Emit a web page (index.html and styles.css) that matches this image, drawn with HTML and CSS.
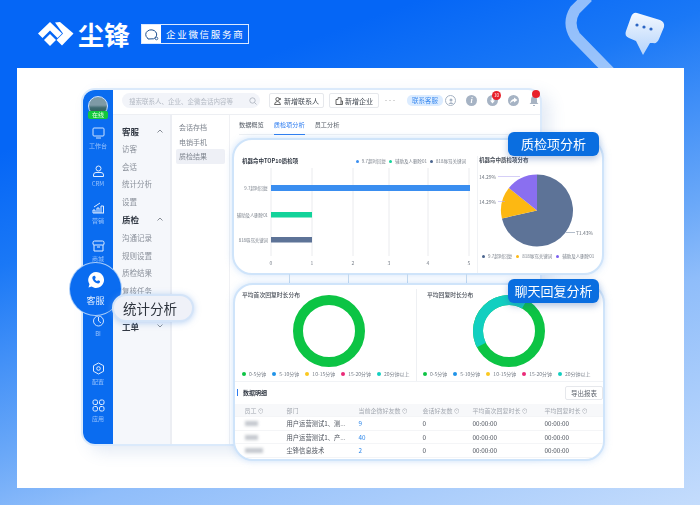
FILE: index.html
```html
<!DOCTYPE html>
<html>
<head>
    <title>尘锋 企业微信服务商</title>
    <link rel="stylesheet" href="styles.css">
</head>
<body>
<div class="page">
    <svg class="deco-ring" width="110" height="68" viewBox="0 0 110 68">
        <path d="M28 -3 L15 10 Q7 23 15 36 L50 72" fill="none" stroke="#fff" stroke-opacity="0.55" stroke-width="11"/>
    </svg>
    <svg class="deco-bubble" width="44" height="48" viewBox="0 0 44 48">
        <defs><linearGradient id="bub" x1="0" y1="0" x2="0" y2="1"><stop offset="0" stop-color="#f3f8ff"/><stop offset="1" stop-color="#b4d3fb"/></linearGradient></defs>
        <path d="M14 2 L37 9 Q42 11 41 16 L36 28 Q34 33 30 32 L27 32 L20 44 L13 30 L6 27 Q1 25 3 20 L8 6 Q10 1 14 2 Z" fill="url(#bub)"/>
        <circle cx="14" cy="14" r="1.6" fill="#2c66c4"/><circle cx="21" cy="16" r="1.6" fill="#2c66c4"/><circle cx="28" cy="18" r="1.6" fill="#2c66c4"/>
    </svg>

    <header class="brand">
        <svg class="brand-logo" width="36" height="24" viewBox="0 0 36 24">
            <path d="M0 11.5 L12 0 L24 11.5 L19.500 16 L12 8.500 L4.500 16 Z" fill="#fff"/>
            <path d="M12 12 L18 18 L12 24 L6 18 Z" fill="#fff"/>
            <path d="M17 0.500 L22 0 L35.500 11.500 L24 23.500 L18.500 18 L25 11.500 Z" fill="#fff"/>
        </svg>
        <span class="brand-name">尘锋</span>
        <div class="partner">
            <span class="partner-icon">
                <svg width="15" height="13" viewBox="0 0 15 13"><path d="M3.500 10 A5.500 4.700 0 1 1 9.500 10.800 L4 11 Z" fill="none" stroke="#1c4f8f" stroke-width="1"/><circle cx="12.500" cy="10.500" r="1.300" fill="none" stroke="#1c4f8f" stroke-width="0.800"/></svg>
            </span>
            <span class="partner-text">企业微信服务商</span>
        </div>
    </header>

    <main class="panel">
        <div class="app">
            <aside class="rail">
                <div class="avatar-wrap">
                    <span class="avatar"></span>
                    <span class="online">在线</span>
                </div>
                <div class="rail-item">
                    <svg width="13" height="12" viewBox="0 0 13 12"><rect x="1" y="1" width="11" height="8" rx="1" fill="none" stroke="#cfe3ff"/><path d="M4 11 H9" stroke="#cfe3ff"/></svg>
                    <span>工作台</span>
                </div>
                <div class="rail-item">
                    <svg width="13" height="12" viewBox="0 0 13 12"><circle cx="6.500" cy="3.500" r="2.500" fill="none" stroke="#e2eeff"/><path d="M1.500 11.500 V10 Q1.500 7.500 4 7.500 H9 Q11.500 7.500 11.500 10 V11.500 Z" fill="none" stroke="#e2eeff"/></svg>
                    <span>CRM</span>
                </div>
                <div class="rail-item">
                    <svg width="13" height="12" viewBox="0 0 13 12"><path d="M1 11 V8 H3 V11 M5 11 V6 H7 V11 M9 11 V4 H11.500 V11 M1 11 H12 M2 5 L8 1" fill="none" stroke="#e2eeff"/></svg>
                    <span>营销</span>
                </div>
                <div class="rail-item">
                    <svg width="13" height="12" viewBox="0 0 13 12"><path d="M2 5 V11 H11 V5 M1 2.500 Q1 1 2.500 1 H10.500 Q12 1 12 2.500 V4 Q12 5 10.500 5 H2.500 Q1 5 1 4 Z M5 7 H8" fill="none" stroke="#e2eeff"/></svg>
                    <span>商城</span>
                </div>
                <div class="rail-item rail-gap">
                    <svg width="13" height="12" viewBox="0 0 13 12"><circle cx="6.500" cy="6" r="5" fill="none" stroke="#cfe3ff"/><path d="M6.500 2 V6 L9 8" fill="none" stroke="#cfe3ff"/></svg>
                    <span>BI</span>
                </div>
                <div class="rail-item rail-gap-sm">
                    <svg width="13" height="13" viewBox="0 0 13 13"><path d="M6.500 1 L11.500 3.700 V9.300 L6.500 12 L1.500 9.300 V3.700 Z" fill="none" stroke="#e2eeff" stroke-linejoin="round"/><circle cx="6.500" cy="6.500" r="1.800" fill="none" stroke="#e2eeff"/></svg>
                    <span>配置</span>
                </div>
                <div class="rail-item">
                    <svg width="13" height="13" viewBox="0 0 13 13"><g fill="none" stroke="#e2eeff"><rect x="1" y="1" width="4.500" height="4.500" rx="1.500"/><rect x="7.500" y="1" width="4.500" height="4.500" rx="1.500"/><rect x="1" y="7.500" width="4.500" height="4.500" rx="1.500"/><rect x="7.500" y="7.500" width="4.500" height="4.500" rx="1.500"/></g></svg>
                    <span>应用</span>
                </div>
            </aside>

            <div class="app-body">
                <div class="topbar">
                    <div class="search">
                        <span>搜索联系人、企业、企微会话内容等</span>
                        <svg width="8" height="8" viewBox="0 0 8 8"><circle cx="3.500" cy="3.500" r="2.700" fill="none" stroke="#a9b0bb" stroke-width="0.8"/><path d="M5.500 5.500 L7.500 7.500" stroke="#a9b0bb" stroke-width="0.8"/></svg>
                    </div>
                    <button class="top-btn btn-contact">
                        <svg width="8" height="8" viewBox="0 0 8 8"><circle cx="3.500" cy="2.200" r="1.700" fill="none" stroke="#444" stroke-width="0.8"/><path d="M0.500 7.500 Q1 4.500 3.500 4.500 Q6 4.500 6.500 7.500 Z M6 1 V3 M5 2 H7" fill="none" stroke="#444" stroke-width="0.8"/></svg>
                        新增联系人
                    </button>
                    <button class="top-btn btn-company">
                        <svg width="8" height="8" viewBox="0 0 8 8"><path d="M1 7.500 V2.500 H3 V0.700 H6 V7.500 Z M6 4 H7.500 V7.500 H6" fill="none" stroke="#444" stroke-width="0.8"/></svg>
                        新增企业
                    </button>
                    <span class="dots">•••</span>
                    <span class="service">联系客服</span>
                    <div class="top-icons">
                        <span class="round-icon round-a">
                            <svg width="8" height="8" viewBox="0 0 8 8"><circle cx="4" cy="3" r="1.500" fill="#a6b3c4"/><path d="M1.500 7 Q4 3.500 6.500 7 Z" fill="#a6b3c4"/></svg>
                        </span>
                        <span class="round-icon round-i">i</span>
                        <span class="round-icon">
                            <svg width="11" height="11" viewBox="0 0 11 11"><path d="M4.500 2.500 H6.500 V5.500 H8 L5.500 8.500 L3 5.500 H4.500 Z" fill="#fff"/></svg>
                            <em class="badge">10</em>
                        </span>
                        <span class="round-icon">
                            <svg width="11" height="11" viewBox="0 0 11 11"><path d="M6 2.500 L9.500 5 L6 7.500 V6 Q3.500 6 2 8.500 Q2.500 4.500 6 4 Z" fill="#fff"/></svg>
                        </span>
                        <span class="bell">
                            <svg width="10" height="11" viewBox="0 0 10 11"><path d="M5 1 Q8 1 8 5 V7.500 L9.500 9 H0.500 L2 7.500 V5 Q2 1 5 1 Z M4 10 H6 V11 H4 Z" fill="#a7b3c2"/></svg>
                            <em class="badge badge-bell"></em>
                        </span>
                    </div>
                </div>

                <div class="work">
                    <nav class="nav">
                        <div class="nav-head">客服 <svg class="chev" width="6" height="4" viewBox="0 0 6 4"><path d="M0.500 3.500 L3 1 L5.500 3.500" fill="none" stroke="#7a808a" stroke-width="0.900"/></svg></div>
                        <a>访客</a>
                        <a>会话</a>
                        <a>统计分析</a>
                        <a>设置</a>
                        <div class="nav-head nav-head-2">质检 <svg class="chev" width="6" height="4" viewBox="0 0 6 4"><path d="M0.500 3.500 L3 1 L5.500 3.500" fill="none" stroke="#7a808a" stroke-width="0.900"/></svg></div>
                        <a>沟通记录</a>
                        <a>规则设置</a>
                        <a>质检结果</a>
                        <a>复核任务</a>
                        <div class="nav-head nav-head-3">工单 <svg class="chev" width="6" height="4" viewBox="0 0 6 4"><path d="M0.500 0.500 L3 3 L5.500 0.500" fill="none" stroke="#7a808a" stroke-width="0.900"/></svg></div>
                    </nav>
                    <div class="subnav">
                        <a>会话存档</a>
                        <a>电销手机</a>
                        <a class="on">质检结果</a>
                    </div>
                    <div class="content">
                        <div class="tabs">
                            <span>数据概览</span>
                            <span class="tab-on">质检项分析</span>
                            <span>员工分析</span>
                        </div>
                    </div>
                </div>
            </div>

            <!-- the two enlarged cards sit over the window -->
            <section class="card card-top">
                <div class="chart-bar">
                    <div class="chart-head">
                        <b>机器命中TOP10质检项</b>
                        <ul class="legend">
                            <li><i class="c-blue"></i>9.7超时回复</li>
                            <li><i class="c-mint"></i>辅助及人删除01</li>
                            <li><i class="c-slate"></i>818辱骂关键词</li>
                        </ul>
                    </div>
                    <svg width="238" height="102" viewBox="0 0 238 102" class="bars">
                        <g stroke="#e4e6ea" stroke-width="0.8">
                            <path d="M31 0 V88 M72 0 V88 M113 0 V88 M149 0 V88 M188 0 V88 M229 0 V88"/>
                        </g>
                        <rect x="31" y="17" width="199" height="6" fill="#3a8ef0"/>
                        <rect x="31" y="44" width="41" height="5.500" fill="#12d39a"/>
                        <rect x="31" y="69" width="41" height="5.500" fill="#5d7397"/>
                        <g font-size="4.400" fill="#7b828c" text-anchor="end">
                            <text x="28" y="22">9.7超时回复</text>
                            <text x="28" y="48.500">辅助及人删除01</text>
                            <text x="28" y="73.500">818辱骂关键词</text>
                        </g>
                        <g font-size="5" fill="#7b828c" text-anchor="middle">
                            <text x="31" y="97">0</text><text x="72" y="97">1</text><text x="113" y="97">2</text>
                            <text x="149" y="97">3</text><text x="188" y="97">4</text><text x="229" y="97">5</text>
                        </g>
                    </svg>
                </div>
                <div class="chart-pie">
                    <b>机器命中质检项分布</b>
                    <svg width="124" height="88" viewBox="0 0 124 88" class="pie">
                        <g transform="translate(58,45.500)">
                            <path d="M0 0 L0 -36 A36 36 0 1 1 -35.100 8 Z" fill="#5d7397"/>
                            <path d="M0 0 L-28.150 -22.440 A36 36 0 0 0 -35.100 8 Z" fill="#fdb812"/>
                            <path d="M0 0 L0 -36 A36 36 0 0 0 -28.150 -22.440 Z" fill="#8a6ff0"/>
                        </g>
                        <path d="M19 11.500 H41 M19 36.500 H26" stroke="#b9aef2" stroke-width="0.600" fill="none"/>
                        <path d="M87 67.500 H96" stroke="#8090a8" stroke-width="0.600" fill="none"/>
                        <g font-size="5" fill="#6c737d">
                            <text x="0" y="13.500">14.29%</text>
                            <text x="0" y="38.500">14.29%</text>
                            <text x="97" y="69.500">71.43%</text>
                        </g>
                    </svg>
                    <ul class="legend legend-pie">
                        <li><i class="c-slate"></i>9.7超时回复</li>
                        <li><i class="c-yellow"></i>818辱骂关键词</li>
                        <li><i class="c-violet"></i>辅助及人删除01</li>
                    </ul>
                </div>
            </section>

            <div class="links"><i></i><i></i><i></i><i></i></div>

            <section class="card card-bottom">
                <div class="donuts">
                    <div class="donut-box">
                        <b>平均首次回复时长分布</b>
                        <svg class="donut" width="72" height="72" viewBox="0 0 72 72">
                            <circle cx="36" cy="36" r="31" fill="none" stroke="#0cc444" stroke-width="10"/>
                        </svg>
                        <ul class="legend legend-donut">
                            <li><i class="c-green"></i>0-5分钟</li>
                            <li><i class="c-sky"></i>5-10分钟</li>
                            <li><i class="c-gold"></i>10-15分钟</li>
                            <li><i class="c-pink"></i>15-20分钟</li>
                            <li><i class="c-teal"></i>20分钟以上</li>
                        </ul>
                    </div>
                    <div class="donut-box">
                        <b class="donut-title-2">平均回复时长分布</b>
                        <svg class="donut" width="72" height="72" viewBox="0 0 72 72">
                            <circle cx="36" cy="36" r="31" fill="none" stroke="#0cc444" stroke-width="10"/>
                            <path d="M8.400 50.100 A31 31 0 0 1 51.500 9.200" fill="none" stroke="#12cfc0" stroke-width="10"/>
                        </svg>
                        <ul class="legend legend-donut">
                            <li><i class="c-green"></i>0-5分钟</li>
                            <li><i class="c-sky"></i>5-10分钟</li>
                            <li><i class="c-gold"></i>10-15分钟</li>
                            <li><i class="c-pink"></i>15-20分钟</li>
                            <li><i class="c-teal"></i>20分钟以上</li>
                        </ul>
                    </div>
                </div>
                <div class="detail-head">
                    <b>数据明细</b>
                    <button>导出报表</button>
                </div>
                <div class="table">
                    <div class="tr th">
                        <span>员工 ⊙</span><span>部门</span><span>当前企微好友数 ⊙</span><span>会话好友数 ⊙</span><span>平均首次回复时长 ⊙</span><span>平均回复时长 ⊙</span>
                    </div>
                    <div class="tr">
                        <span><i class="blur-name"></i></span><span>用户运营测试1、测...</span><span class="num">9</span><span>0</span><span>00:00:00</span><span>00:00:00</span>
                    </div>
                    <div class="tr">
                        <span><i class="blur-name"></i></span><span>用户运营测试1、产...</span><span class="num">40</span><span>0</span><span>00:00:00</span><span>00:00:00</span>
                    </div>
                    <div class="tr">
                        <span><i class="blur-name blur-long"></i></span><span>尘锋信息技术</span><span class="num">2</span><span>0</span><span>00:00:00</span><span>00:00:00</span>
                    </div>
                </div>
            </section>

            <div class="callout callout-a">质检项分析</div>
            <div class="callout callout-b">聊天回复分析</div>

            <div class="kefu">
                <svg width="18" height="18" viewBox="0 0 18 18">
                    <path d="M9 1 A8 8 0 1 1 4.500 15.600 L1.500 16.500 L2.500 13.300 A8 8 0 0 1 9 1 Z" fill="#fff"/>
                    <path d="M6.500 5 L8 4.800 L8.800 7 L7.800 8 Q8.500 9.500 10 10.200 L11 9.200 L13 10 L12.800 11.500 Q12 12.800 10 12.300 Q6 11 5.300 7 Q5.200 5.600 6.500 5 Z" fill="#0a6cf0"/>
                </svg>
                <span>客服</span>
            </div>
            <div class="pill">统计分析</div>
        </div>
    </main>
</div>
</body>
</html>
```

FILE: styles.css
```css
* {
    margin: 0;
    padding: 0;
    box-sizing: border-box;
}

body {
    width: 700px;
    height: 505px;
    overflow: hidden;
    font-family: 'Noto Sans CJK SC', 'Noto Sans', sans-serif;
}

ul {
    list-style: none;
}

i, em {
    font-style: normal;
}

.page {
    position: relative;
    width: 700px;
    height: 505px;
    padding: 22px 16px 0 17px;
    background: linear-gradient(160deg, #0566f6 20%, #1a78f6 35%, #6aa8f8 60%, #8fbdfa 70%, #c4dcfc 100%);
    overflow: hidden;
}

.deco-ring {
    position: absolute;
    top: 0;
    left: 560px;
}

.deco-bubble {
    position: absolute;
    top: 11px;
    left: 623px;
}

/* header */
.brand {
    display: flex;
    align-items: center;
    height: 24px;
    padding-left: 21px;
}

.brand-logo {
    flex: none;
}

.brand-name {
    margin-left: 4px;
    color: #fff;
    font-size: 26px;
    font-weight: 700;
    line-height: 24px;
}

.partner {
    display: flex;
    height: 20px;
    margin-left: 11px;
    border: 1px solid #dbe9ff;
}

.partner-icon {
    display: flex;
    align-items: center;
    justify-content: center;
    width: 19px;
    background: #fff;
}

.partner-text {
    padding: 0 4px 0 5px;
    color: #fff;
    font-size: 9.5px;
    line-height: 18px;
    letter-spacing: 1.7px;
}

/* panel + app window */
.panel {
    margin-top: 22px;
    width: 667px;
    height: 420px;
    padding: 20px 0 0 64px;
    background: #fff;
}

.app {
    position: relative;
    display: flex;
    width: 461px;
    height: 358px;
    border: 2px solid #dbeafb;
    border-radius: 14px;
    background: #fff;
    box-shadow: 8px 6px 16px rgba(90, 130, 190, 0.16);
    filter: blur(0.3px);
}

.rail {
    flex: none;
    width: 30px;
    background: #0a6cf0;
    border-radius: 12px 0 0 12px;
    color: #bcd8ff;
    font-size: 6px;
    text-align: center;
}

.avatar-wrap {
    position: relative;
    height: 35px;
    padding-top: 6px;
}

.avatar {
    display: block;
    width: 20px;
    height: 20px;
    margin: 0 auto;
    border: 1px solid #cfe3ff;
    border-radius: 50%;
    background: linear-gradient(#7e9aa5 0 45%, #3f6b70 60%, #2f5a52);
}

.online {
    position: absolute;
    left: 5px;
    top: 21px;
    width: 20px;
    height: 8px;
    background: #14c83c;
    border-radius: 2px;
    color: #e8ffe8;
    font-size: 6px;
    line-height: 8px;
}

.rail-item {
    display: flex;
    flex-direction: column;
    align-items: center;
    height: 37.500px;
    padding-top: 2px;
}

.rail-item span {
    line-height: 8px;
    margin-top: 3px;
    opacity: 0.8;
}

.rail-gap {
    margin-top: 38px;
}

.rail-gap-sm {
    margin-top: 9px;
}

.app-body {
    flex: 1;
    display: flex;
    flex-direction: column;
    min-width: 0;
}

.topbar {
    display: flex;
    align-items: center;
    height: 25px;
    padding: 0 0 3px 9px;
    border-bottom: 1px solid #edeff3;
}

.search {
    display: flex;
    align-items: center;
    justify-content: space-between;
    width: 138px;
    height: 15px;
    padding: 0 3px 0 7px;
    border-radius: 8px;
    background: #f2f4f9;
    color: #b4bac4;
    font-size: 6.5px;
}

.top-btn {
    display: flex;
    align-items: center;
    gap: 2px;
    height: 15px;
    justify-content: center;
    border: 1px solid #e6e8ec;
    border-radius: 2px;
    background: #fff;
    color: #444b55;
    font-family: inherit;
    font-size: 7px;
}

.btn-contact {
    width: 55px;
    margin-left: 9px;
}

.btn-company {
    width: 50px;
    margin-left: 5px;
}

.dots {
    width: 22px;
    text-align: center;
    color: #555;
    font-size: 4px;
}

.service {
    width: 36px;
    height: 11px;
    margin-left: 6px;
    border-radius: 5px;
    background: #dcecff;
    color: #3f8df0;
    font-size: 6.5px;
    line-height: 11px;
    text-align: center;
}

.top-icons {
    display: flex;
    align-items: center;
    gap: 10px;
    margin-left: 2px;
}

.round-icon {
    position: relative;
    display: flex;
    align-items: center;
    justify-content: center;
    width: 11px;
    height: 11px;
    border-radius: 50%;
    background: #a6b3c4;
    color: #fff;
    font-size: 8px;
    line-height: 11px;
}

.round-a {
    background: #fff;
    border: 1.5px solid #a6b3c4;
}

.round-i {
    font-family: 'Liberation Serif', serif;
    font-style: italic;
    font-weight: 700;
}

.badge {
    position: absolute;
    top: -4px;
    right: -3px;
    width: 9px;
    height: 9px;
    border-radius: 50%;
    background: #e8202a;
    color: #fff;
    font-size: 4.500px;
    line-height: 9px;
    text-align: center;
}

.bell {
    position: relative;
    display: block;
    width: 11px;
    height: 11px;
}

.bell svg {
    display: block;
}

.badge-bell {
    top: -5px;
    right: 0;
    width: 8px;
    height: 8px;
}

.work {
    flex: 1;
    display: flex;
    min-height: 0;
}

.nav {
    flex: none;
    width: 59px;
    padding: 7px 0 0 9px;
    background: #f5f7fb;
    border-right: 2px solid #eceef3;
    font-size: 7.5px;
    color: #8a909a;
}

.nav a {
    display: block;
    height: 17.500px;
    line-height: 17.500px;
}

.nav-head {
    position: relative;
    height: 18px;
    color: #333a45;
    font-size: 8.500px;
    font-weight: 700;
    line-height: 18px;
}

.nav-head-2 {
    margin-top: 0;
    margin-bottom: 1px;
}

.nav-head-3 {
    margin-top: 18px;
}

.chev {
    position: absolute;
    right: 7px;
    top: 7px;
}

.subnav {
    flex: none;
    width: 58px;
    padding: 5px 4px 0;
    border-right: 1px solid #f0f1f4;
    font-size: 7px;
    color: #7f858f;
}

.subnav a {
    display: block;
    height: 14.500px;
    padding-left: 3px;
    line-height: 14.500px;
}

.subnav .on {
    background: #eef0f6;
    border-radius: 2px;
    height: 15px;
}

.content {
    flex: 1;
    padding-left: 9px;
}

.tabs {
    display: flex;
    gap: 10px;
    height: 20px;
    border-bottom: 1px solid #eef0f3;
    font-size: 6.200px;
    line-height: 20px;
    color: #555c66;
}

.tab-on {
    color: #2b7bf0;
    border-bottom: 1.500px solid #2b7bf0;
    height: 20px;
}

/* enlarged cards */
.card {
    position: absolute;
    left: 149px;
    width: 372px;
    background: #fff;
    border: 2.500px solid #cfe4fa;
    border-radius: 20px;
    box-shadow: 0 0 7px rgba(120, 175, 240, 0.35);
}

.card-top {
    top: 48px;
    height: 137px;
    display: flex;
    padding: 16px 0 0 6px;
}

.chart-bar {
    width: 237px;
}

.chart-head {
    display: flex;
    align-items: center;
    justify-content: space-between;
    padding: 0 11px 0 2px;
    height: 10px;
    font-size: 5.500px;
    color: #333a45;
}

.bars {
    display: block;
    margin-top: 2px;
    overflow: visible;
}

.legend {
    display: flex;
    gap: 3px;
    color: #777e88;
    font-size: 4.500px;
}

.legend li {
    display: flex;
    align-items: center;
    gap: 3px;
    white-space: nowrap;
}

.legend i {
    width: 3px;
    height: 3px;
    border-radius: 50%;
}

.c-blue { background: #3a8ef0; }
.c-mint { background: #12d39a; }
.c-slate { background: #4a648e; }
.c-yellow { background: #fdb812; }
.c-violet { background: #7a5ff0; }
.c-green { background: #0cc444; }
.c-sky { background: #1f93e8; }
.c-gold { background: #fbc81e; }
.c-pink { background: #ea2a78; }
.c-teal { background: #12cfc0; }

.chart-pie {
    padding-left: 1px;
    border-left: 1px solid #f0f2f5;
    width: 124px;
    font-size: 5.500px;
    color: #4a505a;
}

.pie {
    display: block;
    margin-top: 1px;
}

.legend-pie {
    gap: 4px;
    margin-left: 3px;
}

.links {
    position: absolute;
    left: 206px;
    top: 184px;
    width: 178px;
    height: 12px;
    display: flex;
    justify-content: space-between;
}

.links i {
    width: 1px;
    background: #c3d9ef;
}

.card-bottom {
    left: 150px;
    top: 193px;
    height: 178px;
    padding-top: 4px;
    overflow: hidden;
}

.donuts {
    display: flex;
    height: 93px;
    border-bottom: 1px solid #f1f3f6;
}

.donut-box {
    width: 182px;
    padding: 2px 0 0 7px;
    font-size: 5.800px;
    color: #454b55;
    border-right: 1px solid #eef0f3;
}

.donut-box b {
    display: block;
    height: 8px;
    line-height: 8px;
    font-weight: 500;
}

.donut-title-2 {
    padding-left: 4px;
}

.donut {
    position: relative;
    display: block;
    margin: -4px 0 0 51px;
}

.donut-box:last-child {
    border-right: none;
    padding-left: 6px;
}

.donut-box:last-child .donut {
    margin-left: 50px;
}

.legend-donut {
    margin-top: 3px;
    gap: 6px;
    font-size: 5px;
}

.legend-donut i {
    width: 4px;
    height: 4px;
}

.detail-head {
    display: flex;
    align-items: center;
    justify-content: space-between;
    height: 21px;
    padding-left: 2px;
}

.detail-head b {
    padding-left: 5px;
    border-left: 1px solid #2b7bf0;
    color: #333a45;
    font-size: 6px;
    line-height: 7px;
}

.detail-head button {
    width: 38px;
    height: 14px;
    border: 1px solid #e6e8ec;
    border-radius: 2px;
    background: #fff;
    color: #60666f;
    font-family: inherit;
    font-size: 6.500px;
}

.tr {
    display: grid;
    grid-template-columns: 42px 72px 64px 50px 72px 1fr;
    height: 13.500px;
    padding-left: 9.500px;
    font-size: 6.300px;
    line-height: 13.500px;
    color: #4a505a;
    white-space: nowrap;
    border-bottom: 1px solid #f4f5f7;
}

.th {
    height: 13px;
    margin-top: 1px;
    background: #f7f8fa;
    color: #a3a8b0;
    font-size: 6px;
}

.blur-name {
    display: block;
    width: 13px;
    height: 5px;
    margin-top: 4px;
    background: #c4c8ce;
    filter: blur(1.5px);
}

.blur-long {
    width: 18px;
}

.num {
    color: #2b86ea;
}

.callout {
    position: absolute;
    width: 91px;
    height: 24px;
    background: #0a6ee0;
    border-radius: 6px;
    box-shadow: 0 3px 7px rgba(40, 90, 170, 0.35);
    color: #fff;
    font-size: 13px;
    line-height: 24px;
    text-align: center;
    white-space: nowrap;
}

.callout-a {
    left: 425px;
    top: 42px;
}

.callout-b {
    left: 425px;
    top: 189px;
}

.kefu {
    position: absolute;
    left: -13px;
    top: 173px;
    width: 51px;
    height: 52px;
    display: flex;
    flex-direction: column;
    align-items: center;
    padding-top: 8px;
    border-radius: 50%;
    background: #0a6cf0;
    box-shadow: 0 0 0 1px #a9cdf9;
    color: #e3efff;
    font-size: 9px;
    line-height: 12px;
}

.kefu span {
    margin-top: 6px;
}

.pill {
    position: absolute;
    left: 29px;
    top: 204px;
    width: 82px;
    height: 28px;
    padding-left: 9px;
    border: 2px solid #d4e4f8;
    border-radius: 14px;
    background: #eff1f8;
    box-shadow: 0 1px 6px rgba(120, 170, 235, 0.5);
    color: #2d333d;
    font-size: 13.500px;
    line-height: 24px;
}
```
